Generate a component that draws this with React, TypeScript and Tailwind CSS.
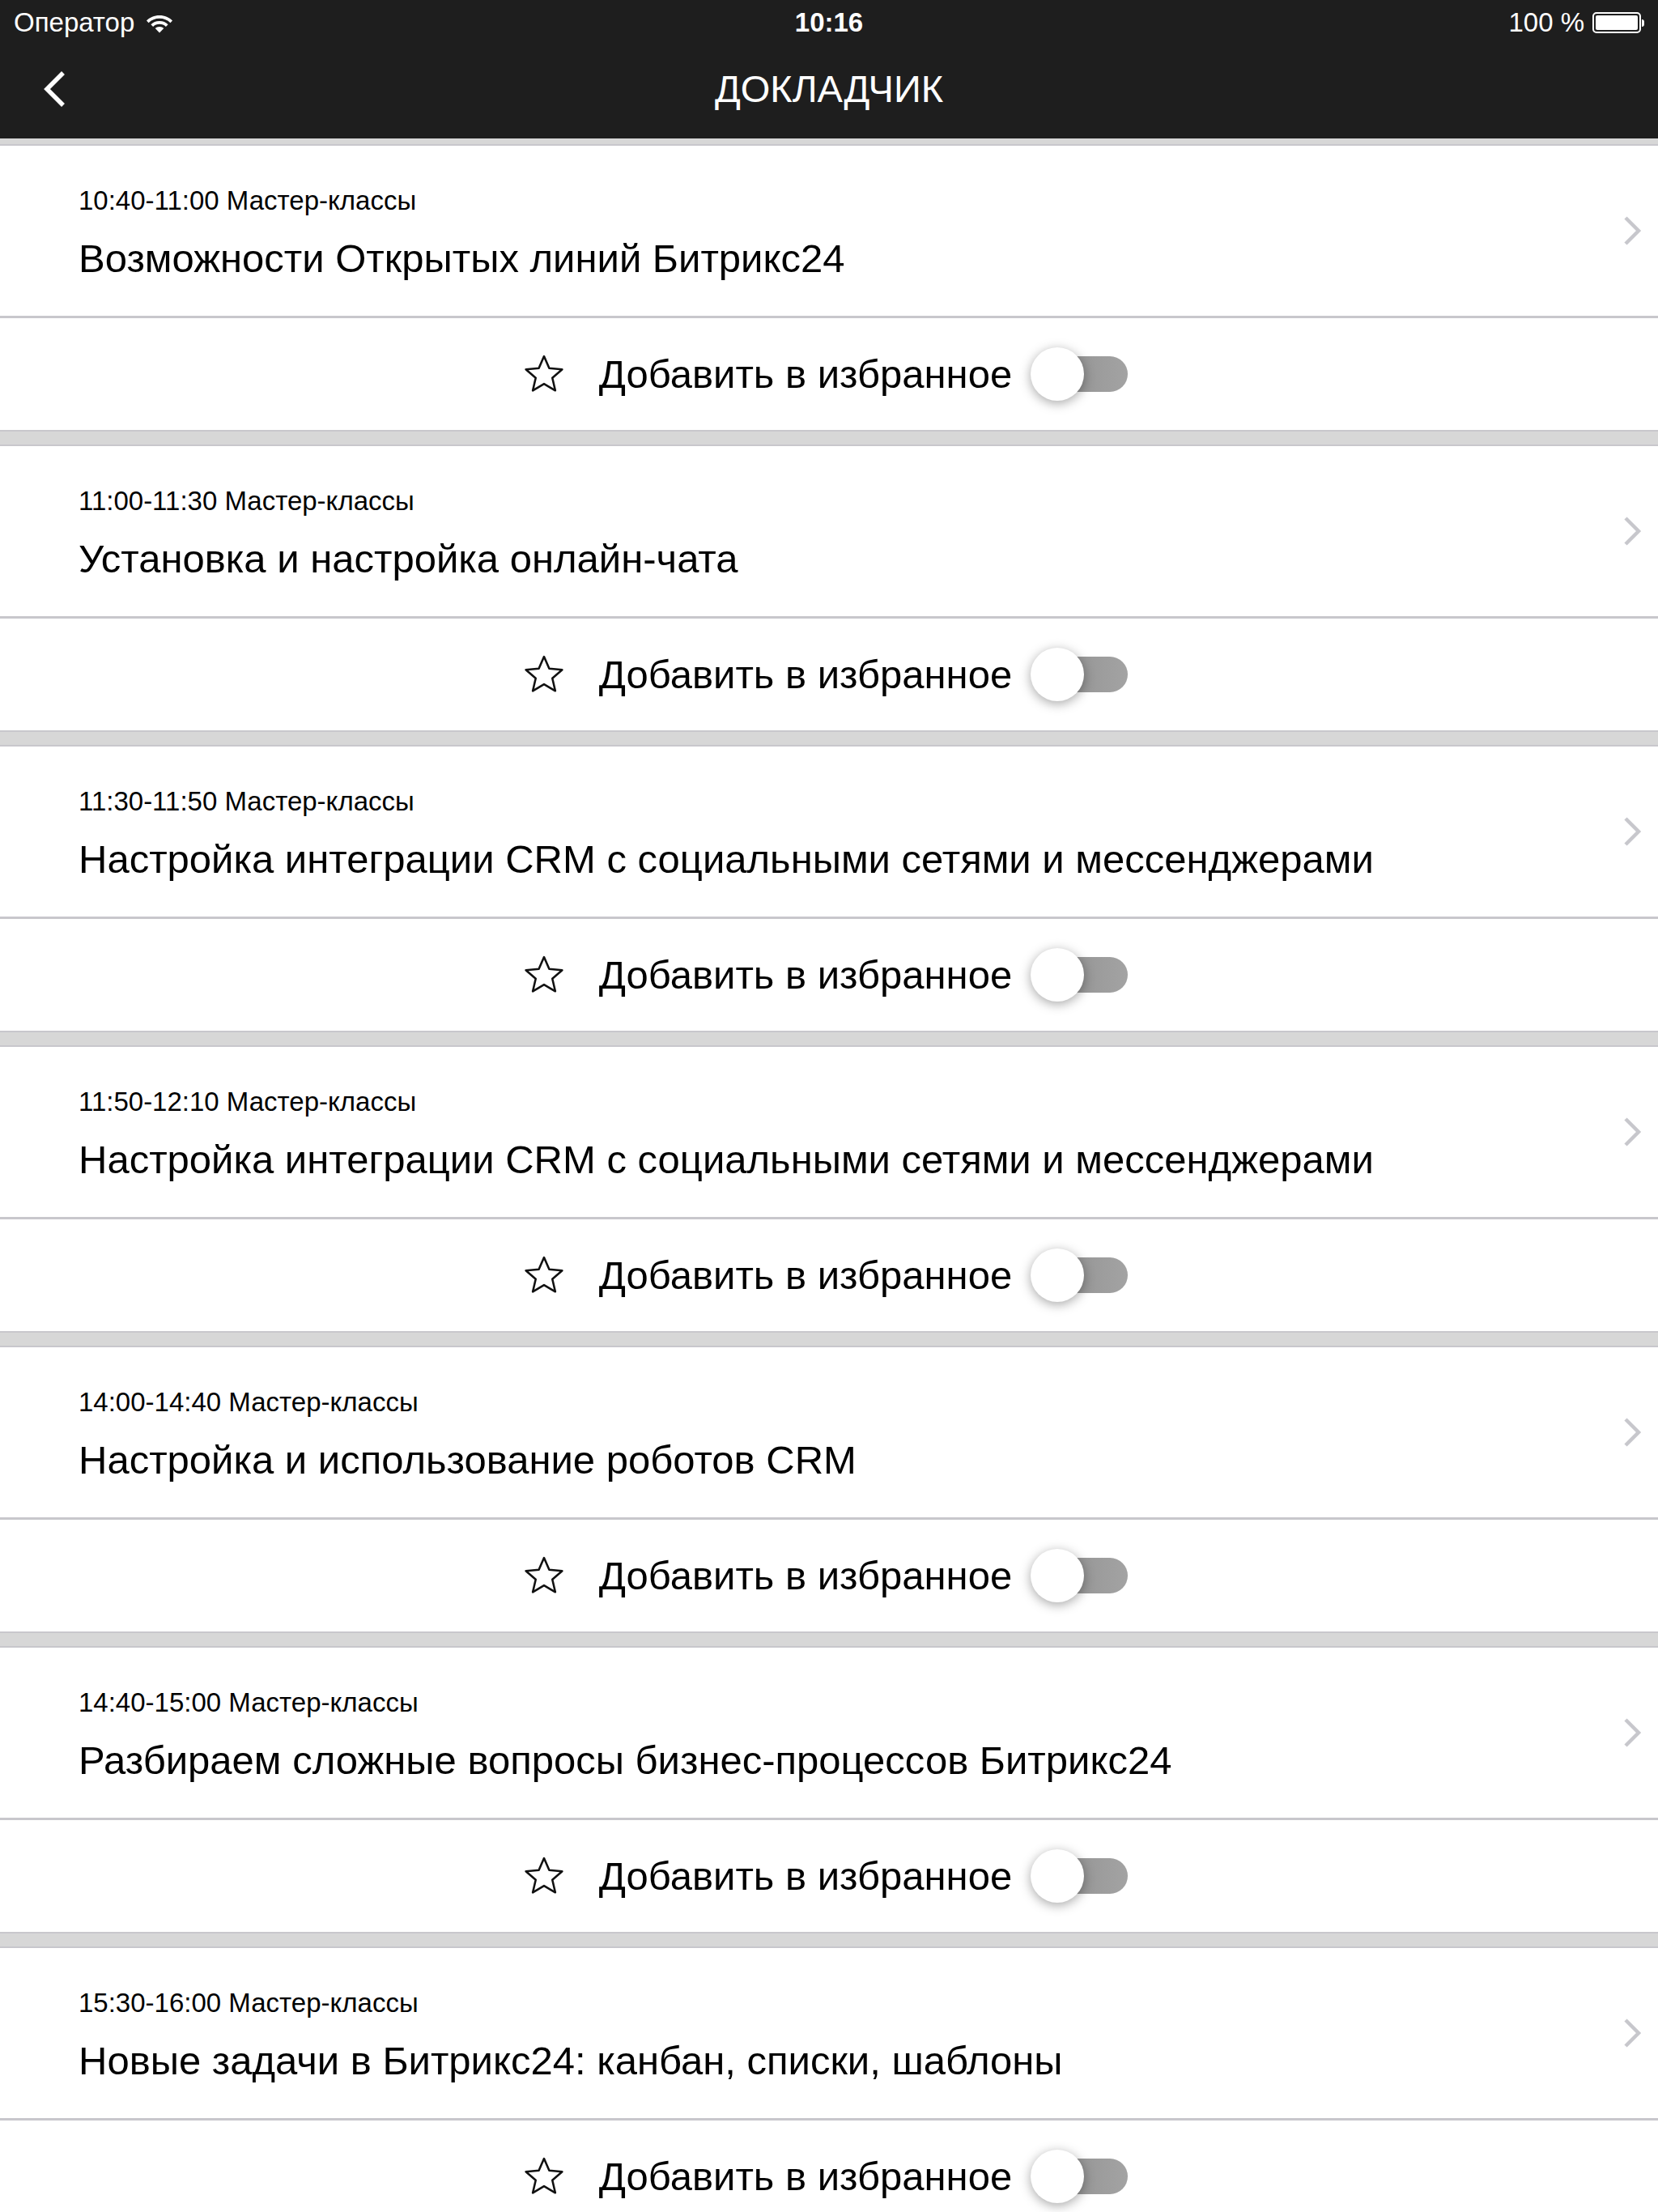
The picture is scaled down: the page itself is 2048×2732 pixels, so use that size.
import React from "react";

type Session = {
  time: string;
  title: string;
};

const SESSIONS: Session[] = [
  { time: "10:40-11:00", title: "Возможности Открытых линий Битрикс24" },
  { time: "11:00-11:30", title: "Установка и настройка онлайн-чата" },
  { time: "11:30-11:50", title: "Настройка интеграции CRM с социальными сетями и мессенджерами" },
  { time: "11:50-12:10", title: "Настройка интеграции CRM с социальными сетями и мессенджерами" },
  { time: "14:00-14:40", title: "Настройка и использование роботов CRM" },
  { time: "14:40-15:00", title: "Разбираем сложные вопросы бизнес-процессов Битрикс24" },
  { time: "15:30-16:00", title: "Новые задачи в Битрикс24: канбан, списки, шаблоны" },
];

function WifiIcon() {
  return (
    <svg width="34" height="26" viewBox="0 0 34 26" fill="white">
      <path d="M17 4C10.5 4 5 6.5 1 10.5l2.6 2.7C7 9.8 11.8 7.8 17 7.8s10 2 13.4 5.4l2.6-2.7C29 6.5 23.5 4 17 4z" />
      <path d="M17 11c-4.3 0-8 1.6-10.6 4.2l2.7 2.7c2-2 4.8-3.2 7.9-3.2s5.9 1.2 7.9 3.2l2.7-2.7C25 12.6 21.3 11 17 11z" />
      <path d="M17 18c-2.2 0-4 .8-5.3 2.1L17 25.5l5.3-5.4C21 18.8 19.2 18 17 18z" />
    </svg>
  );
}

function BatteryIcon() {
  return (
    <div className="flex items-center">
      <div className="w-[60px] h-[26px] rounded-[5px] border-2 border-white p-[2px]">
        <div className="w-full h-full rounded-[2px] bg-white" />
      </div>
      <div className="w-[3px] h-[9px] rounded-r-sm bg-white ml-[1px]" />
    </div>
  );
}

function Toggle() {
  return (
    <div className="relative w-[110px] h-[66px] flex items-center">
      <div className="w-full h-[44px] rounded-full bg-gradient-to-r from-[#8e8e8e] to-[#a3a3a3]" />
      <div className="absolute left-[-10px] top-0 w-[66px] h-[66px] rounded-full bg-white shadow-[0_3px_14px_rgba(0,0,0,0.35)]" />
    </div>
  );
}

function SessionCard({ s }: { s: Session }) {
  return (
    <div>
      {/* верхняя часть с временем и названием */}
      <div className="h-[210px] flex bg-white">
        <div className="flex-1 pl-[97px] pt-[49px]">
          <div className="text-[33px] leading-[38px] text-black">{s.time} Мастер-классы</div>
          <div className="text-[49px] leading-[56px] mt-[24px] text-black">{s.title}</div>
        </div>
        <div className="self-center pr-[20px]">
          <svg width="24" height="38" viewBox="0 0 24 38" fill="none">
            <path d="M4 3l16 16L4 35" stroke="#c7c7cc" strokeWidth="4.5" />
          </svg>
        </div>
      </div>
      <div className="h-[3px] bg-[#c8c7cc]" />
      {/* избранное */}
      <div className="h-[138px] flex items-center justify-center bg-white pr-[12px]">
        <svg width="58" height="56" viewBox="0 0 24 24" fill="none">
          <path
            d="M12 2.6l2.75 6.3 6.85.6-5.2 4.5 1.55 6.7L12 17.2l-5.95 3.5 1.55-6.7-5.2-4.5 6.85-.6z"
            stroke="#111"
            strokeWidth="1.1"
            strokeLinejoin="round"
          />
        </svg>
        <span className="ml-[39px] text-[49px] leading-[56px] text-black">Добавить в избранное</span>
        <div className="ml-[33px]">
          <Toggle />
        </div>
      </div>
      <div className="h-[20px] bg-[#d7d7d7] border-y-2 border-[#c8c7cc]" />
    </div>
  );
}

export default function App() {
  return (
    <div className="w-[2048px] h-[2732px] overflow-hidden bg-white font-[family-name:'Liberation_Sans',Arial,sans-serif]">
      {/* статус-бар + навигация */}
      <div className="bg-[#1e1e1e] text-white">
        <div className="h-[56px] flex items-center px-[17px] text-[33px]">
          <div className="flex-1 flex items-center gap-[14px]">
            <span>Оператор</span>
            <WifiIcon />
          </div>
          <div className="font-semibold">10:16</div>
          <div className="flex-1 flex items-center justify-end gap-[10px]">
            <span>100 %</span>
            <BatteryIcon />
          </div>
        </div>
        <div className="h-[115px] pb-[7px] flex items-center px-[52px]">
          <svg width="32" height="46" viewBox="0 0 32 46" fill="none">
            <path d="M26 3L6 23l20 20" stroke="white" strokeWidth="5.5" />
          </svg>
          <div className="flex-1 text-center text-[47px]">ДОКЛАДЧИК</div>
          <div className="w-[32px]" />
        </div>
      </div>
      <div className="h-[9px] bg-[#d7d7d7] border-b-2 border-[#c8c7cc]" />
      {SESSIONS.map((s, i) => (
        <SessionCard key={i} s={s} />
      ))}
    </div>
  );
}
